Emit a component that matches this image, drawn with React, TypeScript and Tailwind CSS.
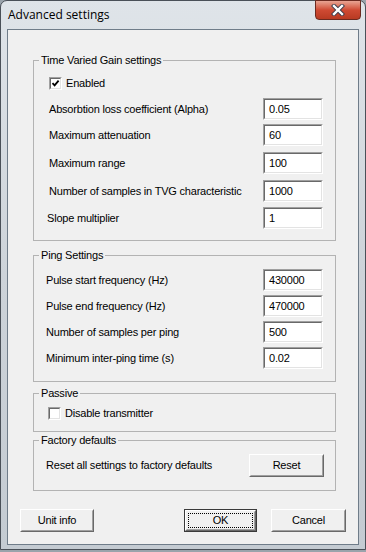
import React from 'react';

const font = { fontFamily: '"Liberation Sans", Arial, sans-serif' };

const Sunken: React.FC<{ className?: string; children?: React.ReactNode }> = ({ className = '', children }) => (
  <div className={`border border-t-[#a0a0a0] border-l-[#a0a0a0] border-b-white border-r-white ${className}`}>
    <div className="w-full h-full border border-t-[#696969] border-l-[#696969] border-b-[#e3e3e3] border-r-[#e3e3e3] bg-white">
      {children}
    </div>
  </div>
);

const Field: React.FC<{ value: string }> = ({ value }) => (
  <Sunken className="w-[60px] h-[22px]">
    <div className="pl-[4px] text-[11px] leading-[18px] text-black">{value}</div>
  </Sunken>
);

const Check: React.FC<{ checked?: boolean }> = ({ checked }) => (
  <Sunken className="w-[13px] h-[13px] shrink-0">
    {checked && (
      <svg width="9" height="9" viewBox="0 0 9 9" className="block">
        <path d="M1.5 4.2 L3.6 6.4 L7.6 1.6" fill="none" stroke="#000" strokeWidth="1.8" />
      </svg>
    )}
  </Sunken>
);

const Btn: React.FC<{ label: string; w: string; def?: boolean }> = ({ label, w, def }) => (
  <div className={`${w} h-[23px] ${def ? 'border border-[#3a3a3a]' : ''}`}>
    <div className="w-full h-full border border-t-white border-l-white border-b-[#696969] border-r-[#696969]">
      <div className="w-full h-full border border-t-[#f0f0f0] border-l-[#f0f0f0] border-b-[#a0a0a0] border-r-[#a0a0a0] bg-[#f0f0f0] flex items-center justify-center p-[1px]">
        <div className={`w-full h-full flex items-center justify-center text-[11px] text-black ${def ? 'border border-dotted border-black' : ''}`}>
          {label}
        </div>
      </div>
    </div>
  </div>
);

const Group: React.FC<{ title: string; className?: string; children: React.ReactNode }> = ({ title, className = '', children }) => (
  <fieldset className={`ml-[25px] w-[303px] border border-[#b3b3b3] ${className}`}>
    <legend className="ml-[5px] px-[2px] text-[11px] leading-[14px] text-black">{title}</legend>
    {children}
  </fieldset>
);

const Row: React.FC<{ label: string; value: string; className?: string; pl?: string }> = ({ label, value, className = '', pl = 'pl-[15px]' }) => (
  <div className={`flex items-center justify-between ${pl} pr-[12px] ${className}`}>
    <span className="text-[11px] text-black">{label}</span>
    <Field value={value} />
  </div>
);

const App: React.FC = () => {
  return (
    <div className="w-[366px] h-[552px] bg-[#9aa3ab] tracking-[-0.2px]" style={font}>
      <div className="w-[366px] h-[550px] border border-[#4a5058] rounded-t-[7px] bg-gradient-to-b from-[#dfe4e9] via-[#cdd3d9] to-[#c4cbd2] flex flex-col">
        <div className="h-[28px] flex items-start justify-between pl-[7px] pr-[4px]">
          <span className="mt-[6px] text-[12px] leading-[16px] tracking-normal text-black" style={{ fontFamily: '"Open Sans", "Noto Sans", sans-serif' }}>
            Advanced settings
          </span>
          <div className="-mt-[1px] w-[46px] h-[20px] rounded-b-[4px] border border-[#6b2a20] bg-gradient-to-b from-[#e8a493] via-[#cf4a33] to-[#b83a22] flex items-center justify-center">
            <svg width="14" height="12" viewBox="0 0 14 12">
              <path d="M3 2 L11 10 M11 2 L3 10" stroke="#3b3b4a" strokeWidth="4.2" strokeLinecap="square" />
              <path d="M3 2 L11 10 M11 2 L3 10" stroke="#ffffff" strokeWidth="2.4" strokeLinecap="square" />
            </svg>
          </div>
        </div>
        <div className="mx-[6px] h-[516px] border border-[#6f7c89] bg-[#f0f0f0] flex flex-col">
          <Group title="Time Varied Gain settings" className="mt-[23px] pb-[11px]">
            <div className="mt-[10px] pl-[15px] flex items-center h-[13px]">
              <Check checked />
              <span className="ml-[4px] text-[11px] text-black">Enabled</span>
            </div>
            <Row label="Absorbtion loss coefficient (Alpha)" value="0.05" className="mt-[8px]" />
            <Row label="Maximum attenuation" value="60" className="mt-[4px]" />
            <Row label="Maximum range" value="100" className="mt-[6px]" />
            <Row label="Number of samples in TVG characteristic" value="1000" className="mt-[6px]" />
            <Row label="Slope multiplier" value="1" className="mt-[5px]" pl="pl-[13px]" />
          </Group>
          <Group title="Ping Settings" className="mt-[7px] pb-[12px]">
            <Row label="Pulse start frequency (Hz)" value="430000" className="mt-[7px]" pl="pl-[12px]" />
            <Row label="Pulse end frequency (Hz)" value="470000" className="mt-[4px]" pl="pl-[12px]" />
            <Row label="Number of samples per ping" value="500" className="mt-[4px]" pl="pl-[12px]" />
            <Row label="Minimum inter-ping time (s)" value="0.02" className="mt-[4px]" pl="pl-[12px]" />
          </Group>
          <Group title="Passive" className="mt-[4px] pb-[11px]">
            <div className="mt-[7px] pl-[14px] flex items-center h-[13px]">
              <Check />
              <span className="ml-[4px] text-[11px] text-black">Disable transmitter</span>
            </div>
          </Group>
          <Group title="Factory defaults" className="mt-[1px] pb-[13px]">
            <div className="mt-[7px] pl-[12px] pr-[11px] flex items-start justify-between">
              <span className="mt-[3px] text-[11px] text-black">Reset all settings to factory defaults</span>
              <Btn label="Reset" w="w-[75px]" />
            </div>
          </Group>
          <div className="mt-[18px] pl-[12px] pr-[12px] flex items-center">
            <Btn label="Unit info" w="w-[74px]" />
            <div className="ml-auto flex gap-[14px]">
              <Btn label="OK" w="w-[73px]" def />
              <Btn label="Cancel" w="w-[75px]" />
            </div>
          </div>
        </div>
      </div>
    </div>
  );
};

export default App;
